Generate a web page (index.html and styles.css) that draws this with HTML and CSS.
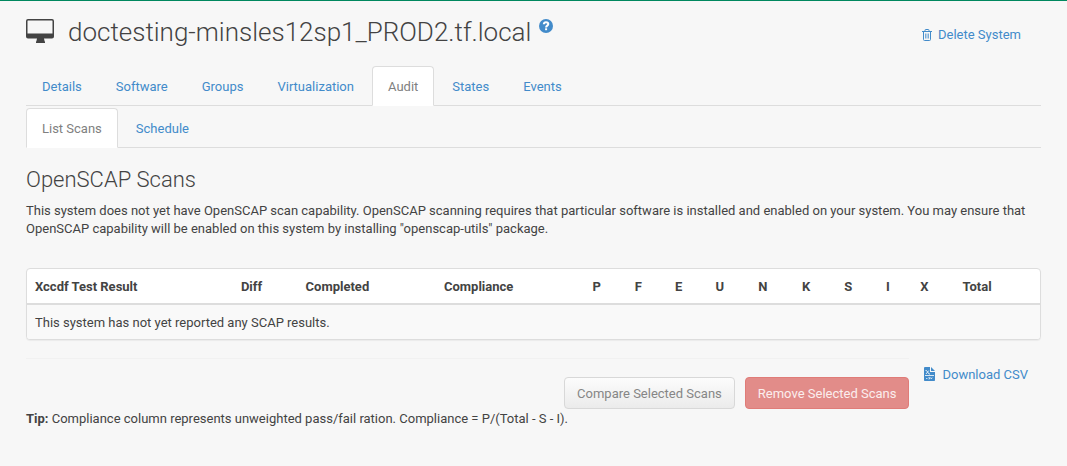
FILE: index.html
```html
<!DOCTYPE html>
<html lang="en">
<head>
<meta charset="utf-8">
<meta name="viewport" content="width=device-width, initial-scale=1">
<title>OpenSCAP Scans</title>
<link rel="stylesheet" href="styles.css">
</head>
<body>
<main class="page">
  <header class="page-header">
    <h1 class="title">
      <svg class="icon-desktop" viewBox="0 0 28 24" aria-hidden="true"><path fill-rule="evenodd" d="M2 0h24a2 2 0 0 1 2 2v15.500a2 2 0 0 1-2 2h-8l.6 2.700 .4.600v1.200h-9v-1.200l.4-.6.6-2.700H2a2 2 0 0 1-2-2V2a2 2 0 0 1 2-2zM2 1.500a.5.5 0 0 0-.5.5v12.500h25V2a.5.5 0 0 0-.5-.5z"/></svg>
      <span>doctesting-minsles12sp1_PROD2.tf.local</span>
      <a class="help" href="#help" aria-label="Help"><svg viewBox="0 0 14 14" aria-hidden="true"><circle cx="7" cy="7" r="7" fill="currentColor"/><path d="M4.800 5.300C4.900 3.900 5.800 3.200 7 3.200c1.400 0 2.300.8 2.300 1.900C9.300 6.600 7.100 6.700 7.100 8.400" fill="none" stroke="#fff" stroke-width="2"/><path d="M6.100 9.300h2v1.900h-2z" fill="#fff"/></svg></a>
    </h1>
    <a class="action" href="#delete"><svg class="icon-trash" viewBox="0 0 10 12" fill="none" stroke="currentColor" aria-hidden="true"><path d="M0 2.500h10M3 2.500V1.300q0-.8.8-.8h2.400q.8 0 .8.800v1.200M1.500 2.500v8q0 1 1 1h5q1 0 1-1v-8"/><path d="M3.500 4.500v5M5 4.500v5M6.500 4.500v5" stroke-width=".7"/></svg>Delete System</a>
  </header>

  <nav class="tabs" aria-label="System">
    <a class="tab" href="#details">Details</a>
    <a class="tab" href="#software">Software</a>
    <a class="tab" href="#groups">Groups</a>
    <a class="tab" href="#virtualization">Virtualization</a>
    <a class="tab active" href="#audit" aria-current="page">Audit</a>
    <a class="tab" href="#states">States</a>
    <a class="tab" href="#events">Events</a>
  </nav>
  <nav class="tabs" aria-label="Audit">
    <a class="tab active" href="#scans" aria-current="page">List Scans</a>
    <a class="tab" href="#schedule">Schedule</a>
  </nav>

  <h2 class="section-title">OpenSCAP Scans</h2>
  <p class="intro">This system does not yet have OpenSCAP scan capability. OpenSCAP scanning requires that particular software is installed and enabled on your system. You may ensure that OpenSCAP capability will be enabled on this system by installing "openscap-utils" package.</p>

  <div class="panel">
    <table class="scans">
      <thead>
        <tr><th>Xccdf Test Result</th><th>Diff</th><th>Completed</th><th>Compliance</th><th>P</th><th>F</th><th>E</th><th>U</th><th>N</th><th>K</th><th>S</th><th>I</th><th>X</th><th>Total</th></tr>
      </thead>
      <tbody>
        <tr><td colspan="14">This system has not yet reported any SCAP results.</td></tr>
      </tbody>
    </table>
  </div>

  <div class="footer">
    <div class="buttons">
      <button class="btn" type="button" disabled>Compare Selected Scans</button>
      <button class="btn btn-danger" type="button" disabled>Remove Selected Scans</button>
    </div>
    <a class="action download" href="#csv"><svg class="icon-csv" viewBox="0 0 11 14" aria-hidden="true"><path fill="currentColor" d="M1 0h5v5h5v8.200q0 .8-.8.800H.8Q0 14 0 13.200V1q0-1 1-1zM7 0l4 4H7z"/><path d="M1.500 3.500h1l2.500 3.500h1M4.800 3.500L2 7M1 8.500h9" fill="none" stroke="#fff" stroke-width=".8"/><path d="M2 11.500h1.500M4.500 10.500h1v1.500h-1M6.500 10.500l.8 1.500.9-1.500" fill="none" stroke="#fff" stroke-width=".7"/></svg>Download CSV</a>
  </div>
  <p class="tip"><strong>Tip:</strong> Compliance column represents unweighted pass/fail ration. Compliance = P/(Total - S - I).</p>
</main>
</body>
</html>
```
FILE: styles.css
```css
* { box-sizing: border-box; }

body {
  margin: 0;
  background: #f7f7f7;
  border-top: 1px solid #00885f;
  color: #434343;
  font: 13px/18px Roboto, "Liberation Sans", sans-serif;
}

a { color: #428bca; text-decoration: none; }

.page { padding: 13px 26px 24px; }

.page-header {
  display: flex;
  justify-content: space-between;
  padding-right: 20px;
  margin-bottom: 16px;
}

.page-header .action { padding-top: 6px; }

.title {
  display: flex;
  align-items: center;
  margin: 0;
  font-size: 26px;
  line-height: 36px;
  font-weight: 300;
}

.icon-desktop { width: 28px; height: 24px; margin: 0 14px 2px 0; fill: currentColor; }

.help { align-self: flex-start; display: flex; margin: 5px 0 0 8px; }
.help svg { width: 14px; height: 14px; }

.action { display: flex; align-items: center; }
.icon-trash { width: 10px; height: 12px; margin-right: 6px; }
.icon-csv { width: 11px; height: 14px; margin: 0 7px 2px 0; }

.tabs {
  display: flex;
  gap: 2px;
  margin-bottom: 2px;
  border-bottom: 1px solid #ddd;
}

.tab {
  padding: 11px 15px 9px;
  margin-bottom: -1px;
  border: 1px solid transparent;
  border-radius: 4px 4px 0 0;
}

.tab.active {
  background: #fff;
  border-color: #ddd;
  border-bottom-color: #fff;
  color: #808080;
}

.section-title {
  margin: 18px 0 8px;
  font-size: 22px;
  line-height: 28px;
  font-weight: 300;
}

.intro { margin: 0 0 30px; }

.panel {
  border: 1px solid #ddd;
  border-radius: 4px;
  background: #fff;
  box-shadow: 0 1px 1px rgba(0, 0, 0, .05);
  overflow: hidden;
}

.scans { width: 100%; border-collapse: collapse; }
.scans th, .scans td { padding: 9px 8px 7px; text-align: left; }
.scans th { border-bottom: 2px solid #ddd; font-weight: 700; }
.scans th:last-child { padding-right: 12px; }
.scans td { background: #f9f9f9; }

.footer { display: flex; margin-top: 18px; }

.buttons {
  flex: 1;
  display: flex;
  justify-content: flex-end;
  gap: 10px;
  padding-top: 18px;
  border-top: 1px solid #f1f1f1;
}

.btn {
  padding: 7px 12px 5px;
  border: 1px solid #d8d8d8;
  border-radius: 4px;
  background: linear-gradient(#fcfcfc, #ebebeb);
  color: #868686;
  font: inherit;
}

.btn-danger { background: #e28c89; border-color: #e07c78; color: #fbeeee; }

.download { align-self: flex-start; margin: 8px 13px 0 15px; }

.tip { margin: 1px 0 0; }
```
